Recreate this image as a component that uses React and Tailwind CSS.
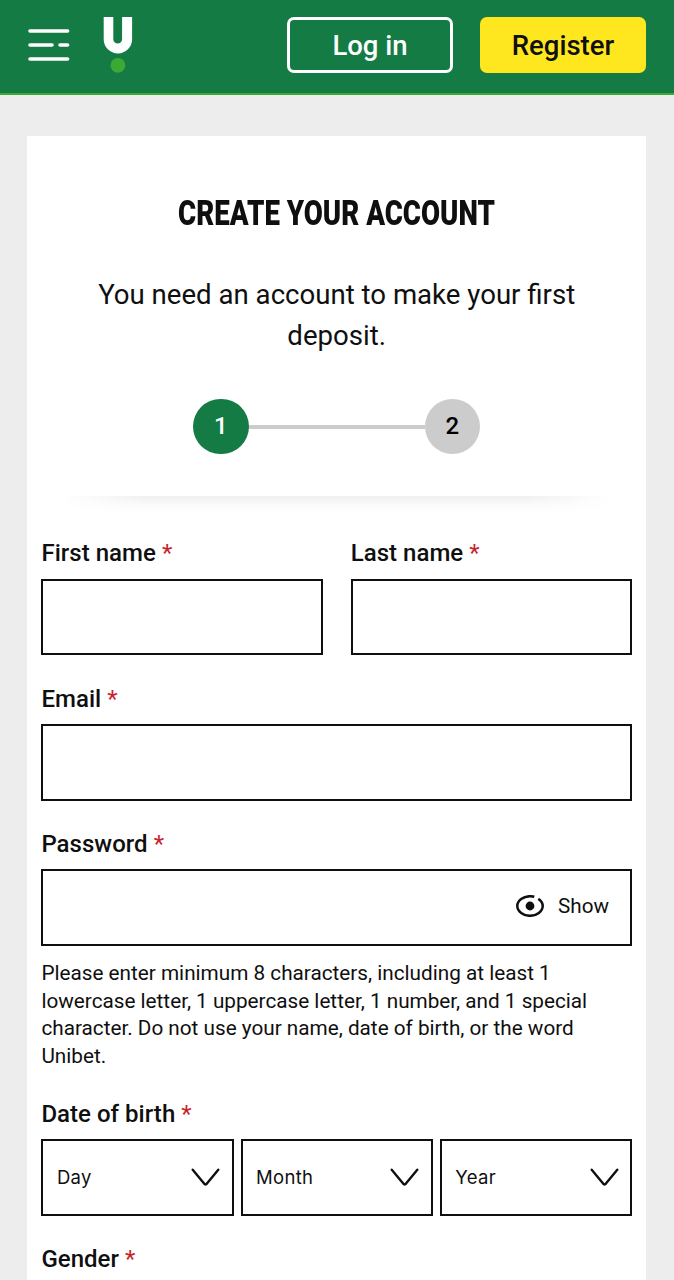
import React from "react";

const MenuIcon = () => (
  <svg width="42" height="32" viewBox="0 0 42 32" fill="none" stroke="white" strokeWidth="3.6" strokeLinecap="round">
    <path d="M2 2H39.6M2 16H24M32 16H39.6M2 30H39.6" />
  </svg>
);

const Logo = () => (
  <svg width="30" height="58" viewBox="0 0 30 58">
    <path
      d="M.7 1H10.3V23.2A4.4 4.4 0 0 0 19.1 23.2V1H29.1V23.2A14.2 14.2 0 0 1 .7 23.2Z"
      fill="white"
    />
    <circle cx="14.9" cy="49.3" r="7.4" fill="#3aaa35" />
  </svg>
);

const EyeIcon = () => (
  <svg width="28" height="22" viewBox="0 0 28 22" fill="none" stroke="#0f0f0f" strokeWidth="2.5">
    <path d="M18.3 1.8C17 1.4 15.6 1.2 14 1.2C7.4 1.2 1.3 5.6 1.3 11C1.3 16.4 7.4 20.8 14 20.8C20.6 20.8 26.7 16.4 26.7 11C26.7 8.2 25 5.7 22.3 3.9" />
    <circle cx="14" cy="11" r="4.4" fill="#0f0f0f" stroke="none" />
  </svg>
);

const ChevronIcon = () => (
  <svg width="29" height="19" viewBox="0 0 29 19" fill="none" stroke="#0f0f0f" strokeWidth="2.4" strokeLinecap="round" strokeLinejoin="round">
    <path d="M1.7 1.7L13.7 16.2Q14.5 17 15.3 16.2L27.3 1.7" />
  </svg>
);

const Label = ({ children }) => (
  <label className="block h-7 pt-[0.5px] text-[24px] leading-7 font-medium tracking-[0.03px] whitespace-nowrap">
    {children} <span className="font-normal text-[#c8232c]">*</span>
  </label>
);

const Field = ({ label, children }) => (
  <div>
    <Label>{label}</Label>
    <div className="mt-3 flex h-[76.5px] items-center justify-end border-2 border-[#0f0f0f] pr-[21px] pb-[3px]">
      {children}
    </div>
  </div>
);

const Select = ({ label }) => (
  <div className="flex h-[76.5px] items-center justify-between border-2 border-[#0f0f0f] pr-[11.5px] pl-[13.5px]">
    <span className="font-['Inter',sans-serif] text-[18.5px] tracking-[0.3px]">{label}</span>
    <ChevronIcon />
  </div>
);

const Step = ({ number, active }) => (
  <div
    className={`flex h-[55.5px] w-[55.5px] items-center justify-center rounded-full pb-[2px] text-[24px] font-medium ${
      active ? "bg-[#147b45] text-white" : "bg-[#cccccc] text-black"
    }`}
  >
    {number}
  </div>
);

const App = () => {
  return (
    <div className="h-[1280px] overflow-hidden bg-[#ededed] font-['Roboto','Liberation_Sans',sans-serif] text-[#0f0f0f]">
      <header className="flex h-[95px] items-start border-b-2 border-[#3aaa35] bg-[#147b45] pr-7 pl-[27.6px]">
        <div className="mt-[29px]">
          <MenuIcon />
        </div>
        <div className="mt-4 ml-[33.4px]">
          <Logo />
        </div>
        <div className="mt-[17px] ml-auto flex gap-[27px]">
          <button className="h-14 w-[166px] rounded-[7px] border-[3.5px] border-white pt-[2px] text-[27.5px] font-medium text-white">
            Log in
          </button>
          <button className="h-14 w-[166px] rounded-[7px] bg-[#ffe71f] pt-[2px] text-[27.5px] font-medium text-[#0f0f0f]">
            Register
          </button>
        </div>
      </header>

      <main className="mr-[28px] ml-[27.4px] mt-[41.4px] h-[1160px] bg-white px-[14px] pt-[57px]">
        <h1 className="flex h-[42px] items-center justify-center text-[35px] font-black whitespace-nowrap">
          <span className="inline-block scale-x-[0.79]">CREATE YOUR ACCOUNT</span>
        </h1>
        <p className="mx-auto mt-[38.5px] w-[510px] text-center text-[27.6px] leading-[41.5px]">
          You need an account to make your first deposit.
        </p>

        <div className="mt-[42px] flex items-center justify-center">
          <Step number="1" active />
          <div className="h-[4px] w-[176px] bg-[#cccccc]" />
          <Step number="2" />
        </div>

        {/* Soft shadow under the stepper, faded out at both ends */}
        <div className="mx-auto mt-[41.5px] h-[17px] w-[550px] bg-linear-to-b from-[#f0f0f0] via-[#fafafa] to-white [mask-image:linear-gradient(to_right,transparent,black_15%,black_85%,transparent)]" />

        <form>
          <div className="mt-[26px] grid grid-cols-2 gap-[28px]">
            <Field label="First name" />
            <Field label="Last name" />
          </div>
          <div className="mt-[28.75px]">
            <Field label="Email" />
          </div>
          <div className="mt-[28.75px]">
            <Field label="Password">
              <EyeIcon />
              <span className="ml-[14px] text-[20.7px]">Show</span>
            </Field>
          </div>
          <p className="mt-[14px] text-[20.72px] leading-[27.7px]">
            Please enter minimum 8 characters, including at least 1 lowercase
            letter, 1 uppercase letter, 1 number, and 1 special character. Do not
            use your name, date of birth, or the word Unibet.
          </p>

          <div className="mt-[28.5px]">
            <Label>Date of birth</Label>
            <div className="mt-3 grid grid-cols-3 gap-[7px]">
              <Select label="Day" />
              <Select label="Month" />
              <Select label="Year" />
            </div>
          </div>
          <div className="mt-[28.75px]">
            <Label>Gender</Label>
          </div>
        </form>
      </main>
    </div>
  );
};

export default App;
